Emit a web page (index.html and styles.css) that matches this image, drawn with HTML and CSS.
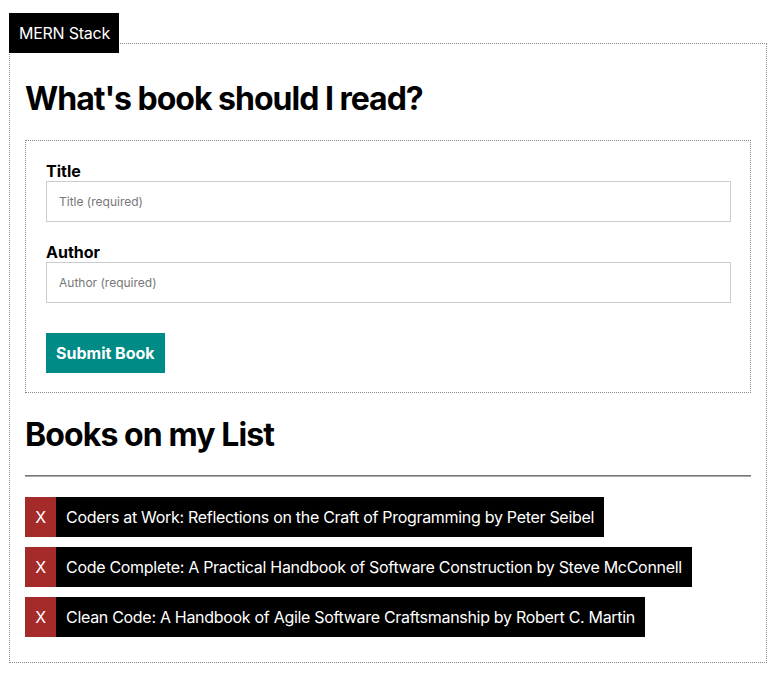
FILE: index.html
```html
<!DOCTYPE html>
<html>
<head>
<meta charset="utf-8">
<link rel="stylesheet" href="styles.css">
</head>
<body>
<div class="app">
  <div class="tag">MERN Stack</div>
  <main class="frame">
    <h1 class="title">What's book should I read?</h1>
    <form class="book-form">
      <label class="field">
        <span class="field-label">Title</span>
        <input class="field-input" type="text" placeholder="Title (required)">
      </label>
      <label class="field">
        <span class="field-label">Author</span>
        <input class="field-input" type="text" placeholder="Author (required)">
      </label>
      <div class="actions">
        <button class="submit" type="button">Submit Book</button>
      </div>
    </form>
    <h2 class="subtitle">Books on my List</h2>
    <hr class="rule">
    <ul class="books">
      <li class="book"><span class="remove">X</span><span class="book-text">Coders at Work: Reflections on the Craft of Programming by Peter Seibel</span></li>
      <li class="book"><span class="remove">X</span><span class="book-text">Code Complete: A Practical Handbook of Software Construction by Steve McConnell</span></li>
      <li class="book"><span class="remove">X</span><span class="book-text">Clean Code: A Handbook of Agile Software Craftsmanship by Robert C. Martin</span></li>
    </ul>
  </main>
</div>
</body>
</html>
```

FILE: styles.css
```css
* { box-sizing: border-box; }
html, body { margin: 0; padding: 0; background: #fff; }
body {
  font-family: Inter, "Noto Sans", sans-serif;
  color: #000;
}
.app {
  padding: 13px 10px 0 9px;
  display: flex;
  flex-direction: column;
  align-items: flex-start;
}
.tag {
  position: relative;
  z-index: 1;
  background: #000;
  color: #fff;
  font-size: 16px;
  line-height: 20px;
  letter-spacing: -0.25px;
  white-space: nowrap;
  padding: 10px 10px;
  height: 40px;
  width: 110px;
  margin-bottom: -10px;
}
.frame {
  align-self: stretch;
  border: 1px dotted #888;
  padding: 35px 15px 25px 15px;
  display: flex;
  flex-direction: column;
}
.title {
  margin: 0;
  font-size: 32px;
  font-weight: 700;
  line-height: 39px;
  letter-spacing: -1px;
}
.book-form {
  margin-top: 22px;
  border: 1px dotted #888;
  padding: 20px 19px 19px 20px;
  display: flex;
  flex-direction: column;
  gap: 20px;
}
.field { display: flex; flex-direction: column; }
.field-label {
  font-size: 16px;
  font-weight: 700;
  line-height: 20px;
}
.field-input {
  height: 41px;
  border: 1px solid #ccc;
  padding: 0 12px;
  font-family: Inter, sans-serif;
  font-size: 12px;
  outline: none;
}
.field-input::placeholder { color: #777; }
.actions { padding-top: 10px; display: flex; }
.submit {
  background: #008b87;
  color: #fff;
  border: none;
  font-family: Inter, sans-serif;
  font-size: 16px;
  font-weight: 700;
  height: 40px;
  padding: 0 10px;
}
.subtitle {
  margin: 22px 0 0;
  font-size: 32px;
  font-weight: 700;
  line-height: 39px;
  letter-spacing: -0.9px;
}
.rule {
  margin: 21px 0 0;
  border: none;
  border-top: 1px solid #777;
  border-bottom: 1px solid #aaa;
  height: 0;
}
.books {
  list-style: none;
  margin: 20px 0 0;
  padding: 0;
  display: flex;
  flex-direction: column;
  align-items: flex-start;
  gap: 10px;
}
.book {
  display: flex;
  height: 40px;
  font-size: 16px;
  line-height: 20px;
  letter-spacing: -0.3px;
  color: #fff;
}
.remove {
  background: #a52a2a;
  padding: 10px 10px;
  width: 31px;
  text-align: center;
}
.book-text {
  background: #000;
  padding: 10px 10px;
}
```
